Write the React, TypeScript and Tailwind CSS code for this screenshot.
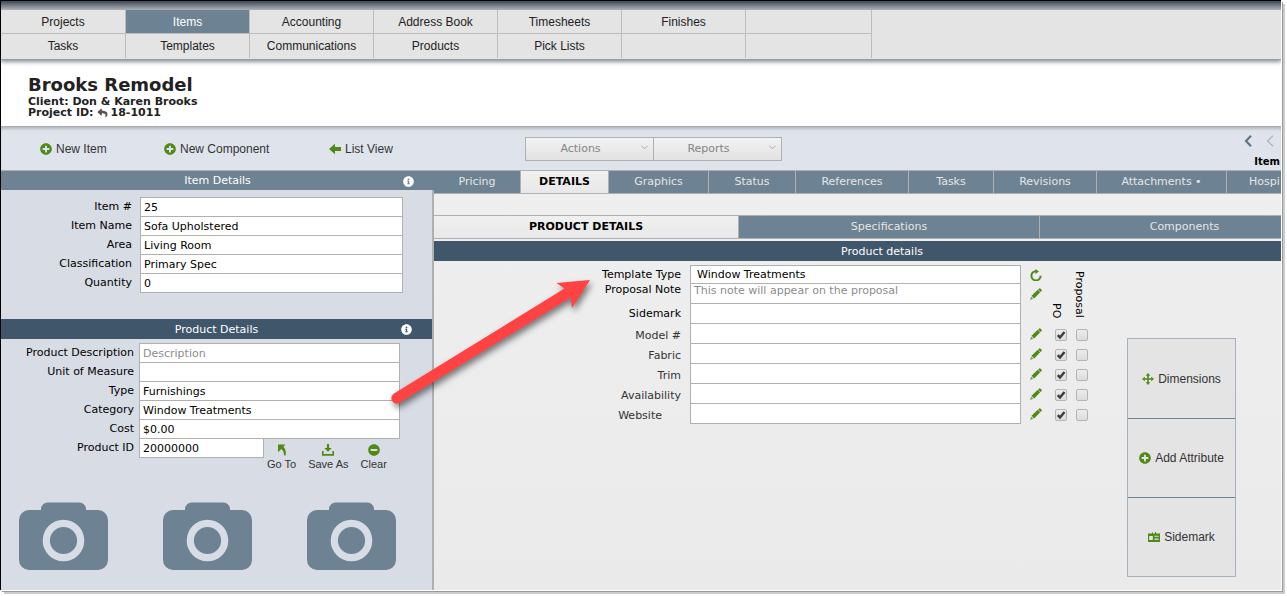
import React, { useState } from "react";
import {
  FaInfoCircle,
  FaMinusCircle,
  FaPlusCircle,
  FaReply,
} from "react-icons/fa";

const navTop = ["Projects", "Items", "Accounting", "Address Book", "Timesheets", "Finishes", ""];
const navBottom = ["Tasks", "Templates", "Communications", "Products", "Pick Lists", "", ""];

const tabs = [
  { label: "Pricing", width: "w-[87px]" },
  { label: "DETAILS", width: "w-[88px]" },
  { label: "Graphics", width: "w-[100px]" },
  { label: "Status", width: "w-[87px]" },
  { label: "References", width: "w-[113px]" },
  { label: "Tasks", width: "w-[85px]" },
  { label: "Revisions", width: "w-[103px]" },
  { label: "Attachments •", width: "w-[130px]" },
];

const subTabs = [
  { label: "PRODUCT DETAILS", width: "w-[305px]" },
  { label: "Specifications", width: "w-[301px]" },
  { label: "Components", width: "flex-1" },
];

const itemFields = [
  { id: "item-no", label: "Item #", value: "25" },
  { id: "item-name", label: "Item Name", value: "Sofa Upholstered" },
  { id: "area", label: "Area", value: "Living Room" },
  { id: "classification", label: "Classification", value: "Primary Spec" },
  { id: "quantity", label: "Quantity", value: "0" },
];

const productFields = [
  { id: "description", label: "Product Description", value: "", placeholder: "Description" },
  { id: "unit", label: "Unit of Measure", value: "" },
  { id: "type", label: "Type", value: "Furnishings" },
  { id: "category", label: "Category", value: "Window Treatments" },
  { id: "cost", label: "Cost", value: "$0.00" },
];

const attributes = ["Model #", "Fabric", "Trim", "Availability", "Website"];

const PencilIcon = () => (
  <svg viewBox="0 0 12 12" className="h-3 w-3 fill-[#4f8a16]">
    <path d="M8.9.7a1.2 1.2 0 0 1 1.7 0l.8.8a1.2 1.2 0 0 1 0 1.7l-.8.7L8.2 1.5z" />
    <path d="M7.8 1.8 10.2 4.200 4.200 10.500 1.500 7.800z" />
    <path d="M1.200 8.600 3.400 10.800 0 12z" opacity=".75" />
  </svg>
);

const RefreshIcon = () => (
  <svg viewBox="0 0 12 12" className="h-3 w-3" fill="none">
    <path d="M10.600 6.800A4.600 4.600 0 1 1 6 2.200" stroke="#4f8a16" strokeWidth="2" />
    <path d="M5.400 0 9 2.400 5.400 5z" fill="#4f8a16" />
  </svg>
);

const ArrowLeftIcon = () => (
  <svg viewBox="0 0 12 12" className="h-3 w-3 fill-[#4f8a16]">
    <path d="M0 6 6 .8V4h6v4H6v3.200z" />
  </svg>
);

const GoToIcon = () => (
  <svg viewBox="0 0 12 12" className="h-3 w-3 fill-[#4f8a16]">
    <path d="M2 .6h7.400L7.400 2.800C9.600 5 10.400 8 9.600 11.600 8 11.600 7.800 11 8 10.200 7.700 8 7 6.600 5.400 5L2 8.200z" />
  </svg>
);

const SaveIcon = () => (
  <svg viewBox="0 0 12 12" className="h-3 w-3 fill-[#4f8a16]">
    <path d="M4.900 0h2.200v4h2.700L6 7.800 2.200 4h2.700z" />
    <path d="M0 7h1.600v3.100h8.800V7H12v4.800H0z" />
  </svg>
);

const MoveIcon = () => (
  <svg viewBox="0 0 12 12" className="h-3 w-3 fill-[#4f8a16]">
    <path d="M6 0 8.300 2.800H6.800v2.400h2.400V3.700L12 6 9.200 8.300V6.800H6.800v2.400h1.500L6 12 3.700 9.200h1.500V6.800H2.800v1.500L0 6l2.800-2.300v1.500h2.400V2.800H3.700z" />
  </svg>
);

const BadgeIcon = () => (
  <svg viewBox="0 0 12 12" className="h-3 w-3">
    <path d="M0 2.500h4v-1h1v1h2V1h1v1.500h4V11H0z" fill="#4f8a16" />
    <path d="M1.200 5h3.600v4H1.200zM6.400 4.800h4.200v1H6.400zM6.400 7.600h4.200v1.200H6.400z" fill="#e4e4e4" />
  </svg>
);

const CameraIcon = () => (
  <svg viewBox="0 0 89 68" className="h-[68px] w-[89px]">
    <path
      d="M22 8V7a6.500 6.500 0 0 1 6.500-6.500h32A6.500 6.500 0 0 1 67 7v1h12a10 10 0 0 1 10 10v40a10 10 0 0 1-10 10H10A10 10 0 0 1 0 58V18A10 10 0 0 1 10 8z"
      fill="#6d8292"
    />
    <circle cx="44.500" cy="38.500" r="17.200" fill="none" stroke="#d8dce5" strokeWidth="7.200" />
  </svg>
);

const NavRow = ({ items, className }: { items: string[]; className: string }) => (
  <div className={`grid grid-cols-[125px_repeat(5,124px)_126px] ${className}`}>
    {items.map((item, i) =>
      item ? (
        <a
          key={i}
          href="#"
          className={`flex items-center justify-center border-r border-[#bdbdbd] ${
            item === "Items" ? "bg-[#6d8292] text-white" : ""
          }`}
        >
          {item}
        </a>
      ) : (
        <span key={i} className="border-r border-[#bdbdbd]" />
      )
    )}
  </div>
);

type FieldProps = {
  id: string;
  label: string;
  value: string;
  placeholder?: string;
  labelClass: string;
  inputWidth: string;
};

const Field = ({ id, label, value, placeholder, labelClass, inputWidth }: FieldProps) => (
  <div className="-mt-px flex items-center">
    <label htmlFor={id} className={`shrink-0 text-right ${labelClass}`}>
      {label}
    </label>
    <input
      id={id}
      type="text"
      defaultValue={value}
      placeholder={placeholder}
      className={`h-5 border border-[#b0b0b0] bg-white px-[3px] placeholder:text-[#8c8c8c] ${inputWidth}`}
    />
  </div>
);

const Check = ({ label, checked }: { label: string; checked?: boolean }) => (
  <span className="relative block h-3 w-3">
    <input
      type="checkbox"
      aria-label={label}
      defaultChecked={checked}
      className="peer block h-3 w-3 appearance-none rounded-xs border border-[#b4b4b4] bg-linear-to-b from-[#ececec] to-[#dcdcdc]"
    />
    <svg
      viewBox="0 0 12 12"
      className="pointer-events-none absolute inset-0 hidden h-3 w-3 peer-checked:block"
      fill="none"
    >
      <path d="M2.800 6.200 5 8.500 9.500 3" stroke="#3c3c3c" strokeWidth="2.400" />
    </svg>
  </span>
);

const ToolbarSelect = ({ label }: { label: string }) => (
  <div className="relative -ml-px">
    <select
      aria-label={label}
      className="h-6 w-[129px] appearance-none border border-[#b0b0b0] bg-linear-to-b from-[#f2f2f2] to-[#e2e2e2] pr-[18px] text-center text-[11px] text-[#858585] [text-align-last:center]"
    >
      <option>{label}</option>
    </select>
    <svg viewBox="0 0 7 5" className="pointer-events-none absolute top-2 right-[6px] h-[5px] w-[7px]" fill="none">
      <path d="m.5.8 3 3 3-3" stroke="#a8a8a8" />
    </svg>
  </div>
);

const App = () => {
  const [activeTab, setActiveTab] = useState("DETAILS");
  const [activeSubTab, setActiveSubTab] = useState("PRODUCT DETAILS");

  return (
    <div className="flex min-h-screen bg-white pr-[6px] pb-[6px] font-['DejaVu_Sans',sans-serif] text-[11px] leading-[14px] text-black">
      <div className="relative flex min-w-0 flex-1 flex-col overflow-hidden border-t border-l border-black shadow-[1px_1px_0_#fff,2px_2px_0_#999,4px_4px_0_#ccc]">
        <div className="h-[9px] bg-linear-to-b from-[#3d4856] to-[#b2b6ba]" />
        <nav className="relative border-b border-[#979da4] bg-[#e4e4e4] font-['Liberation_Sans',sans-serif] text-xs text-[#222] shadow-[0_2px_4px_#8a919a]">
          <NavRow items={navTop} className="h-6 w-[871px] border-b border-[#bdbdbd]" />
          <NavRow items={navBottom} className="h-[25px] pb-px" />
        </nav>

        <header className="border-b border-[#a6a9ad] pt-[13px] pb-2 pl-[27px] font-bold text-[#222]">
          <h1 className="text-lg leading-[23px]">Brooks Remodel</h1>
          <p className="leading-[11px]">Client: Don &amp; Karen Brooks</p>
          <p className="flex items-center leading-[11px]">
            Project ID:
            <FaReply className="mx-[3px] h-[10px] w-[11px] text-[#555]" />
            18-1011
          </p>
        </header>

        <div className="flex h-11 items-center justify-between border-b border-[#b0b0b0] bg-[#dfe3eb] shadow-[inset_0_3px_3px_-1px_#b4b9be]">
          <div className="flex w-[524px] shrink-0 items-center pl-[39px] font-['Liberation_Sans',sans-serif] text-xs text-[#333]">
            <button className="flex w-[124px] items-center gap-1">
              <FaPlusCircle className="h-3 w-3 text-[#4f8a16]" />
              New Item
            </button>
            <button className="flex w-[165px] items-center gap-1">
              <FaPlusCircle className="h-3 w-3 text-[#4f8a16]" />
              New Component
            </button>
            <button className="flex items-center gap-1">
              <ArrowLeftIcon />
              List View
            </button>
          </div>
          <div className="flex flex-1 pl-px">
            <ToolbarSelect label="Actions" />
            <ToolbarSelect label="Reports" />
          </div>
          <div className="flex flex-col items-end gap-[9px] pt-[6px] pr-px">
            <div className="flex gap-[14px] pr-[6px]">
              <button aria-label="First item">
                <svg viewBox="0 0 8 12" className="h-3 w-2" fill="none">
                  <path d="M7 .8 2 6l5 5.200" stroke="#5f7585" strokeWidth="2.200" />
                </svg>
              </button>
              <button aria-label="Previous item">
                <svg viewBox="0 0 8 12" className="h-3 w-2" fill="none">
                  <path d="M7 .8 1.500 6 7 11.200" stroke="#a9b3bd" strokeWidth="1.200" />
                </svg>
              </button>
            </div>
            <span className="text-[10px] leading-3 font-bold">Item</span>
          </div>
        </div>

        <main className="flex flex-1">
          <aside className="flex w-[433px] shrink-0 flex-col bg-[#d8dce5]">
            <h2 className="relative flex h-[19px] items-center justify-center bg-[#6d8292] pt-px text-white">
              Item Details
              <FaInfoCircle className="absolute right-5 h-[11px] w-[11px]" />
            </h2>
            <div className="flex-1 border-r-2 border-[#b0b0b0]">
              <div className="pt-2 pb-[26px]">
                {itemFields.map((field) => (
                  <Field
                    key={field.id}
                    {...field}
                    labelClass="w-[139px] pr-2"
                    inputWidth="w-[263px]"
                  />
                ))}
              </div>
              <h2 className="relative flex h-5 items-center justify-center bg-[#3f566b] pt-px text-white">
                Product Details
                <FaInfoCircle className="absolute right-5 h-[11px] w-[11px]" />
              </h2>
              <div className="pt-[5px]">
                {productFields.map((field) => (
                  <Field
                    key={field.id}
                    {...field}
                    labelClass="w-[138px] pr-[5px]"
                    inputWidth="w-[261px]"
                  />
                ))}
                <div className="flex items-start">
                  <Field
                    id="product-id"
                    label="Product ID"
                    value="20000000"
                    labelClass="w-[138px] pr-[5px]"
                    inputWidth="w-[125px]"
                  />
                  <div className="flex gap-3 pt-[5px] pl-[3px] font-['Liberation_Sans',sans-serif] text-[#333]">
                    <button className="flex flex-col items-center gap-px">
                      <GoToIcon />
                      Go To
                    </button>
                    <button className="flex flex-col items-center gap-px">
                      <SaveIcon />
                      Save As
                    </button>
                    <button className="flex flex-col items-center gap-px">
                      <FaMinusCircle className="h-3 w-3 text-[#4f8a16]" />
                      Clear
                    </button>
                  </div>
                </div>
              </div>
              <div className="flex gap-[55px] pt-[31px] pl-[18px]">
                <CameraIcon />
                <CameraIcon />
                <CameraIcon />
              </div>
            </div>
          </aside>

          <section className="min-w-0 flex-1 overflow-hidden bg-linear-to-b from-[#efefef] to-[#eaeaea]">
            <div className="flex h-[23px] border-b border-[#b0b0b0] bg-[#6d8292]">
              {tabs.map(({ label, width }) => (
                <button
                  key={label}
                  onClick={() => setActiveTab(label)}
                  className={`shrink-0 border-r border-[#b0b0b0] ${width} ${
                    label === activeTab
                      ? "bg-linear-to-b from-[#f0f0f0] to-[#e8e8e8] font-bold"
                      : "text-[#e6e6e6]"
                  }`}
                >
                  {label}
                </button>
              ))}
              <button
                onClick={() => setActiveTab("Hospi")}
                className="flex-1 pl-[22px] text-left text-[#e6e6e6]"
              >
                Hospi
              </button>
            </div>

            <div className="w-full min-w-[896px] pt-[21px]">
              <div className="flex h-6 border-y border-[#b0b0b0] bg-[#6d8292]">
                {subTabs.map(({ label, width }) => (
                  <button
                    key={label}
                    onClick={() => setActiveSubTab(label)}
                    className={`border-r border-[#b0b0b0] ${width} ${
                      label === activeSubTab
                        ? "bg-linear-to-b from-[#f0f0f0] to-[#e8e8e8] font-bold"
                        : "text-[#e6e6e6]"
                    }`}
                  >
                    {label}
                  </button>
                ))}
              </div>
              <h2 className="mt-[2px] flex h-5 items-center justify-center bg-[#3f566b] pt-px text-white">
                Product details
              </h2>

              <div className="flex items-start pt-1">
                <div>
                  <div className="flex items-center">
                    <label htmlFor="template-type" className="w-[256px] pr-[9px] text-right">
                      Template Type
                    </label>
                    <input
                      id="template-type"
                      type="text"
                      defaultValue="Window Treatments"
                      className="h-[19px] w-[331px] border border-[#b0b0b0] bg-white px-[6px]"
                    />
                    <button aria-label="Reset template" className="ml-[9px]">
                      <RefreshIcon />
                    </button>
                  </div>
                  <div className="-mt-px flex items-center">
                    <label htmlFor="proposal-note" className="w-[256px] self-start pr-[9px] text-right">
                      Proposal Note
                    </label>
                    <textarea
                      id="proposal-note"
                      rows={1}
                      placeholder="This note will appear on the proposal"
                      className="block h-[21px] w-[331px] resize-none overflow-hidden border border-[#b0b0b0] bg-white px-[3px] placeholder:text-[#8c8c8c]"
                    />
                    <button aria-label="Edit proposal note" className="ml-[9px]">
                      <PencilIcon />
                    </button>
                  </div>
                  <div className="-mt-px flex items-center">
                    <label htmlFor="sidemark" className="w-[256px] pr-[9px] text-right">
                      Sidemark
                    </label>
                    <input
                      id="sidemark"
                      type="text"
                      className="h-[21px] w-[331px] border border-[#b0b0b0] bg-white px-[3px]"
                    />
                  </div>
                  {attributes.map((name) => (
                    <div key={name} className="-mt-px flex items-center">
                      <label
                        htmlFor={name}
                        className={`w-[256px] pt-1 text-right text-[#333] ${
                          name === "Website" ? "pr-7" : "pr-[9px]"
                        }`}
                      >
                        {name}
                      </label>
                      <input
                        id={name}
                        type="text"
                        className="h-[21px] w-[331px] border border-[#b0b0b0] bg-white px-[3px]"
                      />
                      <button aria-label={`Edit ${name}`} className="ml-[9px]">
                        <PencilIcon />
                      </button>
                    </div>
                  ))}
                </div>

                <div className="pl-[7px]">
                  <div className="flex h-[60px] items-end gap-[9px] pb-[7px]">
                    <span className="[writing-mode:vertical-rl]">PO</span>
                    <span className="[writing-mode:vertical-rl]">Proposal</span>
                  </div>
                  <div className="flex flex-col gap-2 pt-1 pl-[6px]">
                    {attributes.map((name) => (
                      <div key={name} className="flex gap-[9px]">
                        <Check label={`${name} on PO`} checked />
                        <Check label={`${name} on proposal`} />
                      </div>
                    ))}
                  </div>
                </div>

                <div className="mt-[73px] ml-[39px] flex w-[109px] flex-col divide-y divide-[#6d8292] border border-[#a6b1bb] bg-[#e4e4e4] font-['Liberation_Sans',sans-serif] text-xs text-[#333]">
                  <button className="flex h-20 items-center justify-center gap-1">
                    <MoveIcon />
                    Dimensions
                  </button>
                  <button className="flex h-[79px] items-center justify-center gap-1">
                    <FaPlusCircle className="h-3 w-3 text-[#4f8a16]" />
                    Add Attribute
                  </button>
                  <button className="flex h-[78px] items-center justify-center gap-1">
                    <BadgeIcon />
                    Sidemark
                  </button>
                </div>
              </div>
            </div>
          </section>
        </main>

        {/* callout arrow from the category field to the template type */}
        <svg
          viewBox="0 0 220 150"
          className="pointer-events-none absolute top-[269px] left-[384px] h-[150px] w-[220px] drop-shadow-[2px_4px_3px_rgba(0,0,0,0.5)]"
        >
          <path
            d="M9 123.500 179.500 18.500 171.500 13 205 10 187 38 185.500 27.500 14.500 132.800A5.300 5.300 0 0 1 9 123.500z"
            fill="#ff4343"
          />
        </svg>
      </div>
    </div>
  );
};

export default App;
